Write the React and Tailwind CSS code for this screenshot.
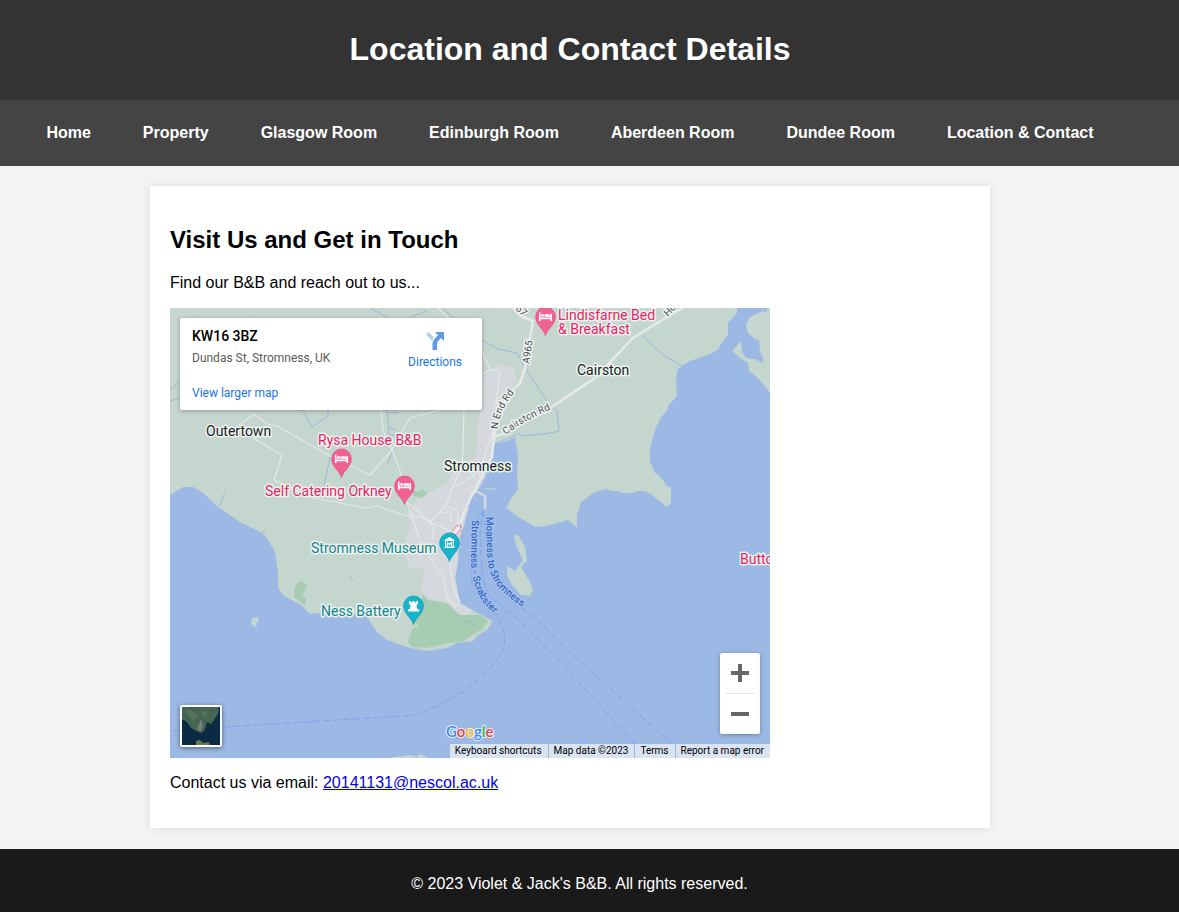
import React from "react";

const LINKS = [
  "Home",
  "Property",
  "Glasgow Room",
  "Edinburgh Room",
  "Aberdeen Room",
  "Dundee Room",
  "Location & Contact",
];

const ROADS = [
  "M68 118L84 106L97 116L107 118L160 148L200 167L222 142L240 110L267 103L294 96",
  "M83 130L112 147L104 172L143 190L197 200L207 198L233 207L253 210L263 217",
  "M211 102L213 123L222 142L230 162L233 189",
  "M294 100L293 137L292 158L283 179L275 199L260 214",
  "M235 192L260 214L282 224L290 222",
  "M237 194L243 212L250 232L263 255L273 268L277 290L285 299L290 294",
  "M280 252L282 272L285 284L290 294",
  "M263 232L264 218M268 206L280 203L282 214M275 199L288 202M288 205L288 218M283 179L300 170L318 154",
  "M313 66L320 62L330 63L326 97L322 127L317 140L309 168",
  "M310 37L320 62M268 0L278 10M343 0L350 7L363 13",
];

const STREAMS = [
  "M200 0L217 9M240 9L257 3M272 0L300 24L312 32L328 41L347 45L355 60L380 98L387 102L389 123L380 125L355 128L348 126L325 136",
  "M472 27L493 47L512 58M133 102L142 119L158 108L158 102M217 102L219 127L230 128M218 105L228 105M219 120L226 122",
  "M0 93L10 90M0 82L10 73M160 149L154 179M223 142L217 157M55 184L49 199M95 221L92 226M179 267L183 273M253 290L259 298M296 315Q303 310 304 318",
];

const FERRIES = [
  "M313 202L302 219V275L325 305Q331 314 334 325Q336 338 332 344Q324 358 313 367L293 384L270 396Q252 407 233 408L167 412L55 419L0 423",
  "M313 202L310 225L312 265L318 287L349 312L388 352L465 436L478 450",
  "M313 202L318 250L326 275L352 300L367 312L408 352L500 434L510 450",
];

function Pin({ x, y, fill, edge, children }) {
  return (
    <g transform={`translate(${x} ${y})`}>
      <path
        d="M0 18.500C-1.500 12-9.800 8-9.800-.2A9.800 9.800 0 1 1 9.800-.2C9.800 8 1.500 12 0 18.500Z"
        fill={fill}
        stroke={edge}
        strokeWidth=".8"
      />
      {children}
    </g>
  );
}

function BedPin({ x, y }) {
  return (
    <Pin x={x} y={y} fill="#f06292" edge="#e64b80">
      <path d="M-6.500-4.500h1.500v5h10v-3.500h1.500V4H5V2.300H-5V4h-1.500ZM-1-2.800h4.500Q5-2.500 5-.3H-1Z" fill="#fff" />
      <circle cx="-3" cy="-1.500" r="1.400" fill="#fff" />
    </Pin>
  );
}

function MapDrawing() {
  return (
    <svg viewBox="0 0 600 450" className="block h-auto w-full font-[Roboto,sans-serif]" role="img" aria-label="Map of Stromness">
      <rect width="600" height="450" fill="#9cb8e5" />
      <g fill="#c5d6ce">
        <path d="M0 0H567V5L563 9L558 15V27L552 34L548 42L535 48L520 53L512 58L507 62L506 72L507 88L498 98L497 103L491 109L485 122L480 140V153L485 165L489 167L498 179H501V195L497 199L487 191L481 186L474 183H468L462 185H453L448 183H443L435 181L425 184L411 194L407 207V219L398 212L377 218L365 219L357 214L348 209L343 205L336 200L342 189L348 182L347 165L348 147L345 129L337 133L325 136L320 150L315 169L305 187L298 202L294 217L290 229L288 255L285 269L287 280L290 295L302 302L323 313L317 322L308 327L303 333L287 335L277 340L257 343L240 340L217 332L207 324L200 314L197 307L150 305L140 306L132 298L113 287L108 280V265L105 244L97 230L92 225L70 214L48 199L32 184L23 179H13L0 187Z" />
        <path d="M597 0V5L593 3L580 9L576 17L578 25L585 31L589 32L590 44L593 50V55L585 51L576 50L572 44L571 33L562 43L570 50L578 55L579 63L588 70L600 85V0Z" />
        <path d="M345 226L349 228L355 239L357 252L351 259L360 274L363 282L360 288L351 287L342 277L337 267V258L345 263L353 252L347 240L344 230Z" />
        <path d="M82 310L88 309L89 314L86 315L87 320L81 316ZM223 449L240 447L247 449L250 446L258 450H223Z" />
      </g>
      <path fill="#d5d8dc" d="M320 62L328 56L343 60L347 73L337 90L330 105L325 136L320 150L315 169L305 187L298 202L294 217L288 232V255L285 269L290 295L302 302L298 308L290 307L277 295L258 290L250 282L255 261L240 260L233 242L240 219L238 205L247 192L277 175L287 154L305 150L308 132L307 119L312 100L313 72Z" />
      <g fill="#a6ccb2">
        <path d="M253 287L258 292L277 295L290 307L310 307L318 313L313 321L302 327L292 334L277 335L257 340L242 339L238 334L243 320L250 318L242 312Z" />
        <path d="M130 273L138 277L132 288L136 291L135 298L124 289L125 279ZM242 182L248 184L253 181L257 185L252 190L244 188Z" />
      </g>
      <path fill="#9cb8e5" d="M301 190L306 185L309 192L306 196V204H303V195L300 200L297 199Z" />
      <path d="M306 183L315 188V201" fill="none" stroke="#d5d8dc" strokeWidth="2.500" />
      <path d="M315 181H326M304 190L308 193M289 238L293 240" fill="none" stroke="#c5d6ce" />
      <g fill="none" stroke="#8fb1df" strokeWidth=".8">
        {STREAMS.map((d) => <path key={d} d={d} />)}
      </g>
      <g fill="none" stroke="#e4e9e9" strokeWidth="1.200" strokeLinejoin="round">
        {ROADS.map((d) => <path key={d} d={d} />)}
      </g>
      <g fill="none" stroke="#e6eaea" strokeWidth="2.500" strokeLinejoin="round">
        <path d="M343 0L351 8L363 13L360 30L355 60L350 75L340 85L330 100L324 127L322 149L310 172L302 187L295 202L289 219" />
        <path d="M325 128L333 126L380 100L425 70L463 30L500 7L513 0" />
      </g>
      <g fill="none" stroke="#7da5e8" strokeDasharray="7 3">
        {FERRIES.map((d) => <path key={d} d={d} />)}
      </g>
      <path d="M281 225L287 218L291 217L290 223L285 227Z" fill="#f6e8ec" stroke="#e03465" strokeDasharray="1.500 1.500" />

      <defs>
        <path id="scrabster" d="M302 212L301 245Q300 275 313 294L334 317" />
        <path id="moaness" d="M316 209L317 240Q316 263 329 280Q340 291 362 306" />
        <path id="endroad" d="M328 121Q328 103 350 77" />
        <path id="cairstonroad" d="M336 127Q355 111 392 97" />
      </defs>
      <g fontSize="10" fontWeight="500" fill="#2f66c8" stroke="#a9c2ea" strokeWidth="2" paintOrder="stroke">
        <text><textPath href="#scrabster">Stromness - Scrabster</textPath></text>
        <text><textPath href="#moaness">Moaness to Stromness</textPath></text>
      </g>
      <g fontSize="10" fill="#4d5257" stroke="#edf2f0" strokeWidth="3" strokeLinejoin="round" paintOrder="stroke">
        <text><textPath href="#endroad">N End Rd</textPath></text>
        <text><textPath href="#cairstonroad">Cairston Rd</textPath></text>
        <text transform="translate(359 56) rotate(-81)">A965</text>
        <text transform="translate(336 -7) rotate(42)">A967</text>
        <text transform="translate(498 9) rotate(-47)">Holm</text>
      </g>
      <g fontSize="14" fill="#202124" stroke="#edf3f1" strokeWidth="3" strokeLinejoin="round" paintOrder="stroke">
        <text x="36" y="128">Outertown</text>
        <text x="407" y="67">Cairston</text>
        <text x="274" y="163">Stromness</text>
        <g fill="#e91e63">
          <text x="388" y="12">Lindisfarne Bed</text>
          <text x="388" y="26">&amp; Breakfast</text>
          <text x="148" y="137">Rysa House B&amp;B</text>
          <text x="95" y="188">Self Catering Orkney</text>
          <text x="570" y="256">Butto</text>
        </g>
        <g fill="#12868f">
          <text x="141" y="245">Stromness Museum</text>
          <text x="151" y="308">Ness Battery</text>
        </g>
      </g>
      <BedPin x={375.5} y={9} />
      <BedPin x={171.5} y={151} />
      <BedPin x={234.5} y={178} />
      <Pin x={279.5} y={235} fill="#12b5cb" edge="#129eaf">
        <path d="M0-6L5-3V-2H-5V-3ZM-5 3.500H5V5H-5ZM-4.500-2H-3.300V4H-4.500ZM3.300-2H4.500V4H3.300Z" fill="#fff" />
        <path d="M-2 3V-.500L0 1.500L2-.500V3" fill="none" stroke="#fff" strokeWidth="1.100" />
      </Pin>
      <Pin x={243.5} y={298} fill="#12b5cb" edge="#129eaf">
        <path d="M-4.500-5H-2.700V-3.500H-1V-5H1V-3.500H2.700V-5H4.500V-1.500H3L3.500 3H5.500V5.500H-5.500V3H-3.500L-3-1.500H-4.500Z" fill="#fff" />
      </Pin>
      <text x="276" y="429" fontSize="15" className="font-[Lato,sans-serif]" fontWeight="600" stroke="#e8effa" strokeWidth="2" paintOrder="stroke">
        <tspan fill="#4285f4">G</tspan>
        <tspan fill="#ea4335">o</tspan>
        <tspan fill="#fbbc04">o</tspan>
        <tspan fill="#4285f4">g</tspan>
        <tspan fill="#34a853">l</tspan>
        <tspan fill="#ea4335">e</tspan>
      </text>
    </svg>
  );
}

function SatelliteThumb() {
  return (
    <svg viewBox="0 0 38 38" className="size-full" aria-hidden="true">
      <rect width="38" height="38" fill="#0b2b44" />
      <path d="M0 0H37L36 7L32 13L29 17L25 15L23 22L20 26L14 24L9 21L5 15L0 12Z" fill="#446454" />
      <path d="M4 2L13 4L17 10L11 14L7 9ZM19 2L26 6L23 12L20 8Z" fill="#577257" />
      <path d="M19 12L21 19L18 25L15 22Z" fill="#778276" />
      <path d="M31 0L30 5M9 0L14 7M1 7L6 12" stroke="#36584a" />
      <path d="M14 34L18 33L21 36L27 35L28 38H14Z" fill="#687850" />
    </svg>
  );
}

function LocationMap() {
  return (
    <div className="relative mt-4 w-[600px] max-w-full overflow-hidden font-[Roboto,sans-serif]">
      <MapDrawing />
      <div className="absolute top-2.5 left-2.5 flex w-[302px] justify-between rounded-xs bg-white px-3 pt-2.5 pb-[9px] shadow-[0_1px_4px_rgba(0,0,0,0.3)]">
        <div className="flex flex-col items-start text-xs">
          <p className="text-sm leading-4 font-medium text-black">KW16 3BZ</p>
          <p className="mt-1.5 leading-4 text-[#5b5b5b]">Dundas St, Stromness, UK</p>
          <a href="#map" className="mt-[19px] leading-4 text-[#1a73e8]">View larger map</a>
        </div>
        <a href="#directions" className="mr-2 flex flex-col items-center pt-1 text-xs leading-4 text-[#1a73e8]">
          <svg viewBox="0 0 18 18" className="mb-1 size-[18px]" aria-hidden="true">
            <path d="M0 2.500L2.500 0L8 5.500L6 9Z" fill="#b5d2f5" />
            <path d="M6.500 18V11.500Q6.500 9 8.500 7L12 3.200L9 0H18V9L15 6L11 10.500V18Z" fill="#5e9ae8" />
          </svg>
          Directions
        </a>
      </div>
      <button aria-label="Show satellite imagery" className="absolute bottom-[11px] left-2.5 size-[42px] overflow-hidden rounded-xs border-2 border-white bg-white shadow-[0_1px_4px_rgba(0,0,0,0.5)]">
        <SatelliteThumb />
      </button>
      <div className="absolute right-2.5 bottom-6 flex w-10 flex-col items-center rounded-xs bg-white shadow-[0_1px_4px_rgba(0,0,0,0.3)]">
        <button aria-label="Zoom in" className="flex size-10 items-center justify-center">
          <svg viewBox="0 0 18 18" className="size-[18px]"><path d="M7 0H11V7H18V11H11V18H7V11H0V7H7Z" fill="#666" /></svg>
        </button>
        <div className="h-px w-[30px] bg-[#e6e6e6]" />
        <button aria-label="Zoom out" className="flex size-10 items-center justify-center">
          <svg viewBox="0 0 18 18" className="size-[18px]"><path d="M0 7H18V11H0Z" fill="#666" /></svg>
        </button>
      </div>
      <div className="absolute right-0 bottom-0 flex h-3.5 gap-px text-[10px] leading-[14px] whitespace-nowrap text-black">
        <button className="bg-[#f5f5f5]/70 pr-1.5 pl-[5px]">Keyboard shortcuts</button>
        <span className="bg-[#f5f5f5]/70 pr-1.5 pl-[5px]">Map data ©2023</span>
        <a href="#terms" className="bg-[#f5f5f5]/70 pr-1.5 pl-[5px]">Terms</a>
        <a href="#report" className="bg-[#f5f5f5]/70 pr-1.5 pl-[5px]">Report a map error</a>
      </div>
    </div>
  );
}

export default function App() {
  return (
    <div className="flex min-h-screen flex-col bg-[#f4f4f4] font-['Liberation_Sans',Arial,sans-serif] text-base leading-[18px] text-black">
      <header className="bg-[#333] pt-[31px] pr-[39px] pb-[33px] text-center text-white">
        <h1 className="text-[32px] leading-9 font-bold">Location and Contact Details</h1>
      </header>
      <nav className="bg-[#444] py-6 pr-[39px]">
        <ul className="flex flex-wrap justify-center gap-x-[52px] gap-y-4">
          {LINKS.map((label) => (
            <li key={label}>
              <a href="#" className="font-bold text-white">{label}</a>
            </li>
          ))}
        </ul>
      </nav>
      <div className="pt-5 pr-[39px] pb-[21px]">
        <main className="mx-auto max-w-[840px] bg-white px-5 pt-10 pb-9 shadow-[0_0_10px_rgba(0,0,0,0.1)]">
          <h2 className="text-2xl leading-7 font-bold">Visit Us and Get in Touch</h2>
          <p className="mt-5">Find our B&amp;B and reach out to us...</p>
          <LocationMap />
          <p className="mt-4">
            Contact us via email:{" "}
            <a href="mailto:20141131@nescol.ac.uk" className="text-[#0000ee] underline">20141131@nescol.ac.uk</a>
          </p>
        </main>
      </div>
      <footer className="grow bg-[#1a1a1a] pt-[26px] pr-5 pb-[19px] text-center text-white">
        <p>© 2023 Violet &amp; Jack's B&amp;B. All rights reserved.</p>
      </footer>
    </div>
  );
}
